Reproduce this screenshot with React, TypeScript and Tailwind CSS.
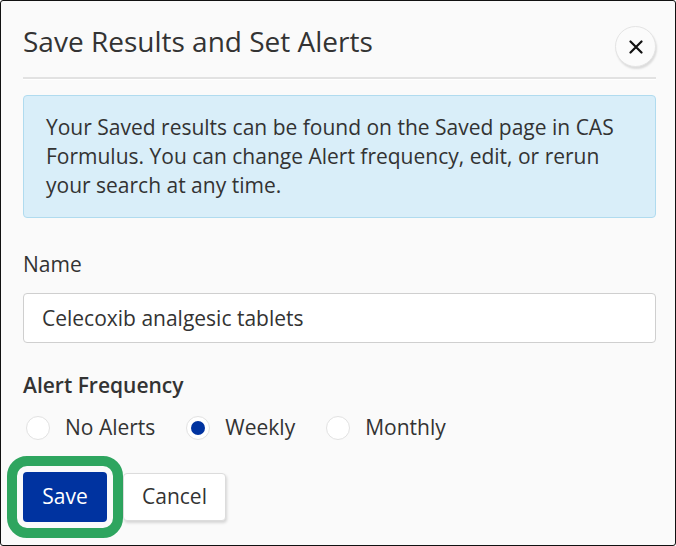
import { useState } from "react"

// Opciones de frecuencia de alerta
const frequencies = ["No Alerts", "Weekly", "Monthly"]

export default function App() {
  const [name, setName] = useState("Celecoxib analgesic tablets")
  const [frequency, setFrequency] = useState("Weekly")

  return (
    <div
      className="w-[676px] h-[546px] overflow-hidden rounded-[3px] border border-[#111] bg-[#fafafa] text-[#333]"
      style={{ fontFamily: '"Open Sans", "Noto Sans", sans-serif' }}
    >
      <div className="pl-[22px] pr-[19px]">
        {/* Cabecera */}
        <div className="flex items-start justify-between pt-[20px]">
          <h2 className="text-[28px] leading-[40px] text-[#333]">Save Results and Set Alerts</h2>
          <button
            aria-label="Close"
            className="mt-[5px] flex h-[41px] w-[41px] items-center justify-center rounded-full border border-[#e4e4e4] bg-[#fbfbfb] shadow-[1px_2px_2px_rgba(0,0,0,0.12)]"
          >
            <svg width="14" height="14" viewBox="0 0 14 14">
              <path d="M1.5 1.5 L12.5 12.5 M12.5 1.5 L1.5 12.5" stroke="#111" strokeWidth="2.2" strokeLinecap="round" />
            </svg>
          </button>
        </div>
        <div className="mt-[10px] h-[3px] border-t-2 border-b border-t-[#e2e2e2] border-b-white" />

        {/* Aviso informativo */}
        <div className="mt-[15px] rounded-[4px] border border-[#b0dbef] bg-[#d9eef9] px-[22px] py-[17px] text-[21px] leading-[29px] text-[#333]">
          Your Saved results can be found on the Saved page in CAS Formulus. You can change Alert frequency, edit, or rerun
          your search at any time.
        </div>

        {/* Nombre */}
        <label className="mt-[32px] block text-[21px] leading-[29px]">Name</label>
        <input
          value={name}
          onChange={(e) => setName(e.target.value)}
          className="mt-[14px] block h-[50px] w-full rounded-[4px] border border-[#cfcfcf] bg-white px-[18px] text-[21px] text-[#333] outline-none"
        />

        {/* Frecuencia de alertas */}
        <div className="mt-[28px] text-[21px] font-semibold leading-[29px]">Alert Frequency</div>
        <div className="mt-[13px] flex items-center">
          {frequencies.map((f) => (
            <label key={f} className="mr-[28px] flex cursor-pointer items-center" onClick={() => setFrequency(f)}>
              <span className="ml-[3px] flex h-[24px] w-[24px] items-center justify-center rounded-full border border-[#e2e2e2] bg-white">
                {frequency === f && <span className="h-[14px] w-[14px] rounded-full bg-[#0033a0]" />}
              </span>
              <span className="ml-[15px] text-[21px] leading-[29px]">{f}</span>
            </label>
          ))}
        </div>

        {/* Botones */}
        <div className="mt-[30px] flex items-center">
          <button className="h-[50px] w-[84px] rounded-[4px] bg-[#0033a0] text-[21px] text-white outline-[10px] outline-offset-[6px] outline-solid outline-[#2ea55f]">
            Save
          </button>
          <button className="ml-[16px] h-[48px] w-[103px] rounded-[4px] border border-[#dcdcdc] bg-white text-[21px] text-[#333] shadow-[1px_2px_3px_rgba(0,0,0,0.15)]">
            Cancel
          </button>
        </div>
      </div>
    </div>
  )
}
